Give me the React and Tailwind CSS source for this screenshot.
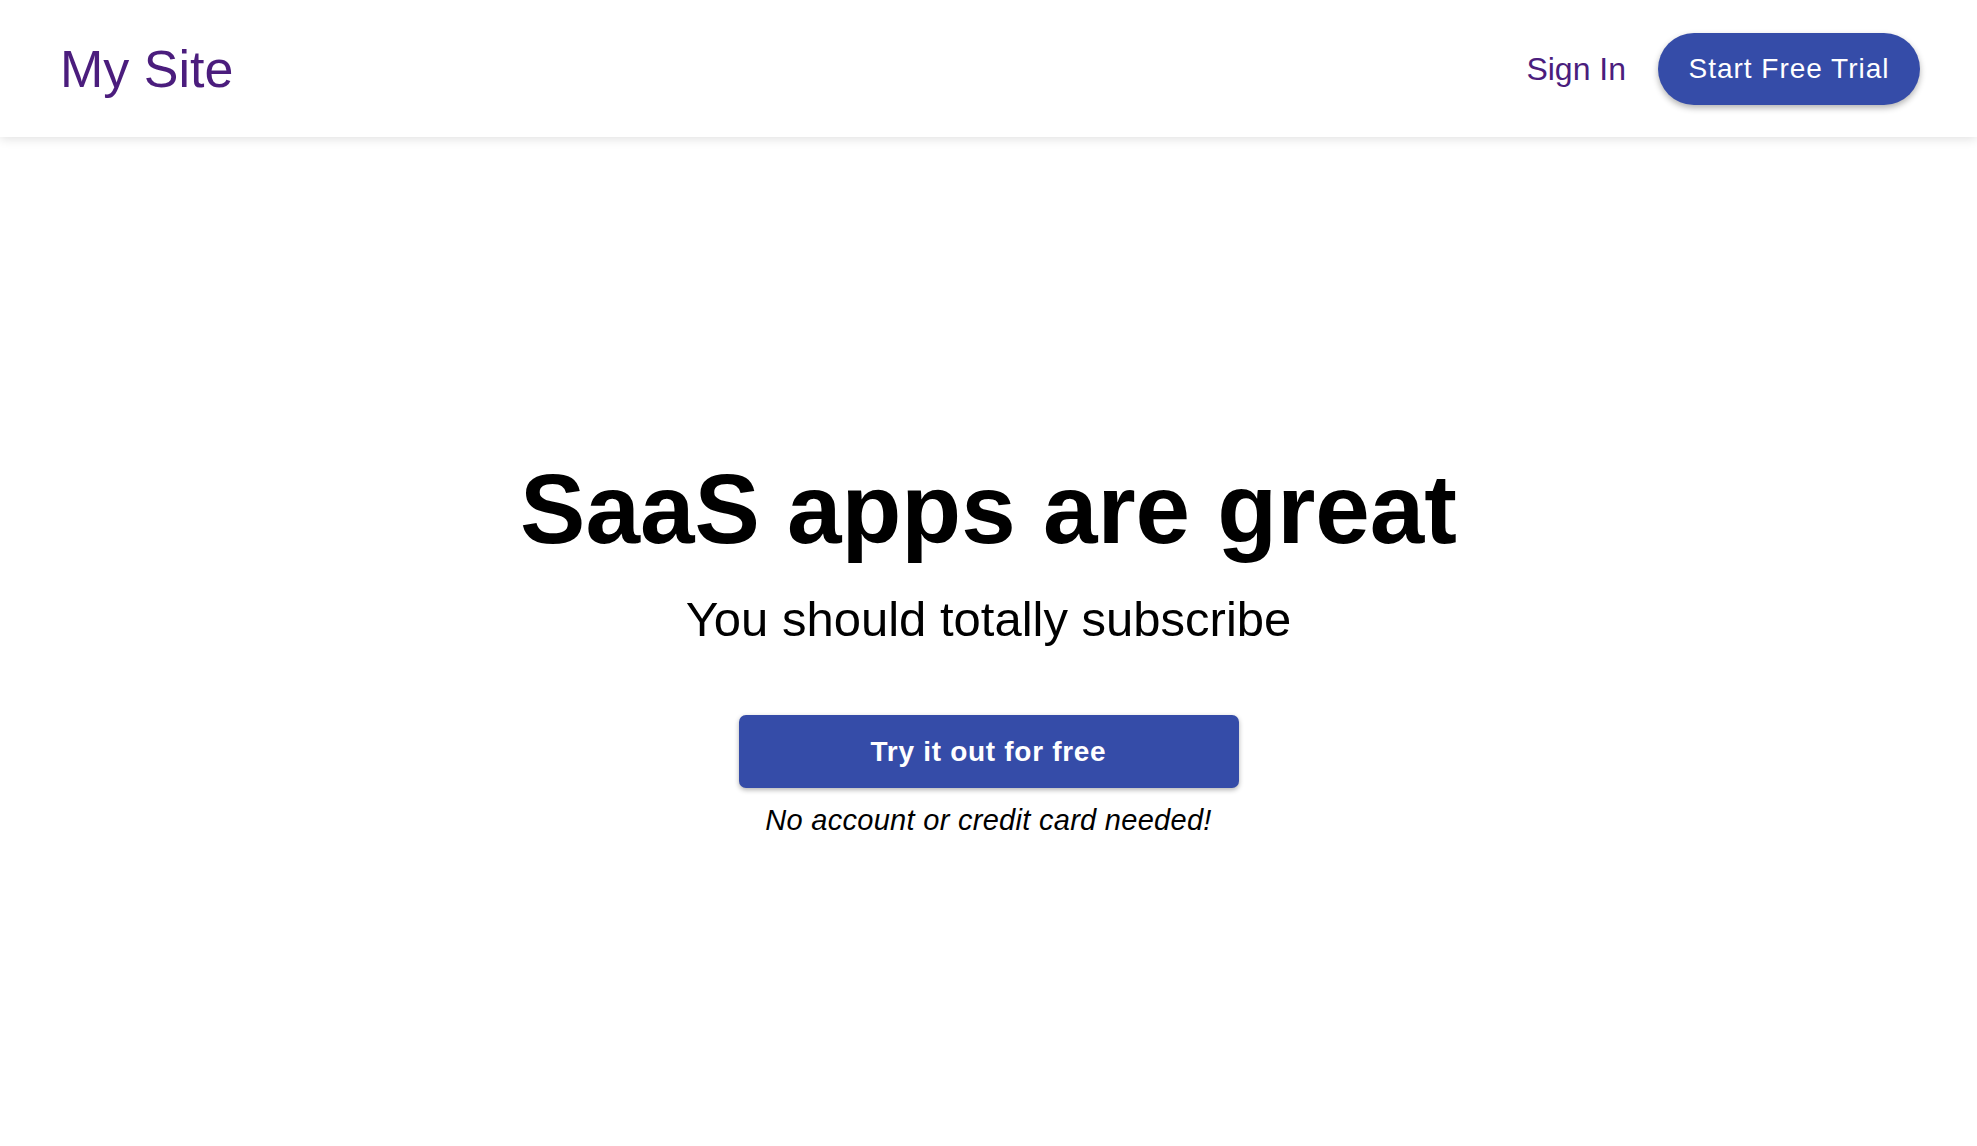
export default function App() {
  return (
    <div className="min-h-screen flex flex-col bg-white" style={{ fontFamily: '"Liberation Sans", Arial, sans-serif' }}>
      {/* Header */}
      <header className="h-[137px] flex items-center justify-between pl-[60px] pr-[57px] bg-white shadow-[0_2px_10px_rgba(0,0,0,0.12)] relative z-10">
        <a href="#" className="text-[52px] leading-none text-[#4b1d7d]">My Site</a>
        <nav className="flex items-center gap-[32px]">
          <a href="#" className="text-[32px] leading-none text-[#4b1d7d]">Sign In</a>
          <button className="h-[72px] w-[262px] rounded-full bg-[#354ca8] text-white text-[28px] leading-none tracking-[0.035em] shadow-[0_3px_6px_rgba(0,0,0,0.3)]">
            Start Free Trial
          </button>
        </nav>
      </header>

      {/* Hero */}
      <main className="flex-1 flex flex-col items-center justify-center pt-3 text-black">
        <h1 className="text-[98px] leading-none font-bold">SaaS apps are great</h1>
        <p className="mt-[37px] text-[49px] leading-none">You should totally subscribe</p>
        <button className="mt-[71px] h-[73px] w-[500px] rounded-[7px] bg-[#354ca8] text-white text-[28px] font-bold leading-none tracking-[0.025em] shadow-[0_2px_5px_rgba(0,0,0,0.3)]">
          Try it out for free
        </button>
        <p className="mt-[18px] text-[29px] leading-none italic font-light tracking-[0.01em]">No account or credit card needed!</p>
      </main>
    </div>
  );
}
